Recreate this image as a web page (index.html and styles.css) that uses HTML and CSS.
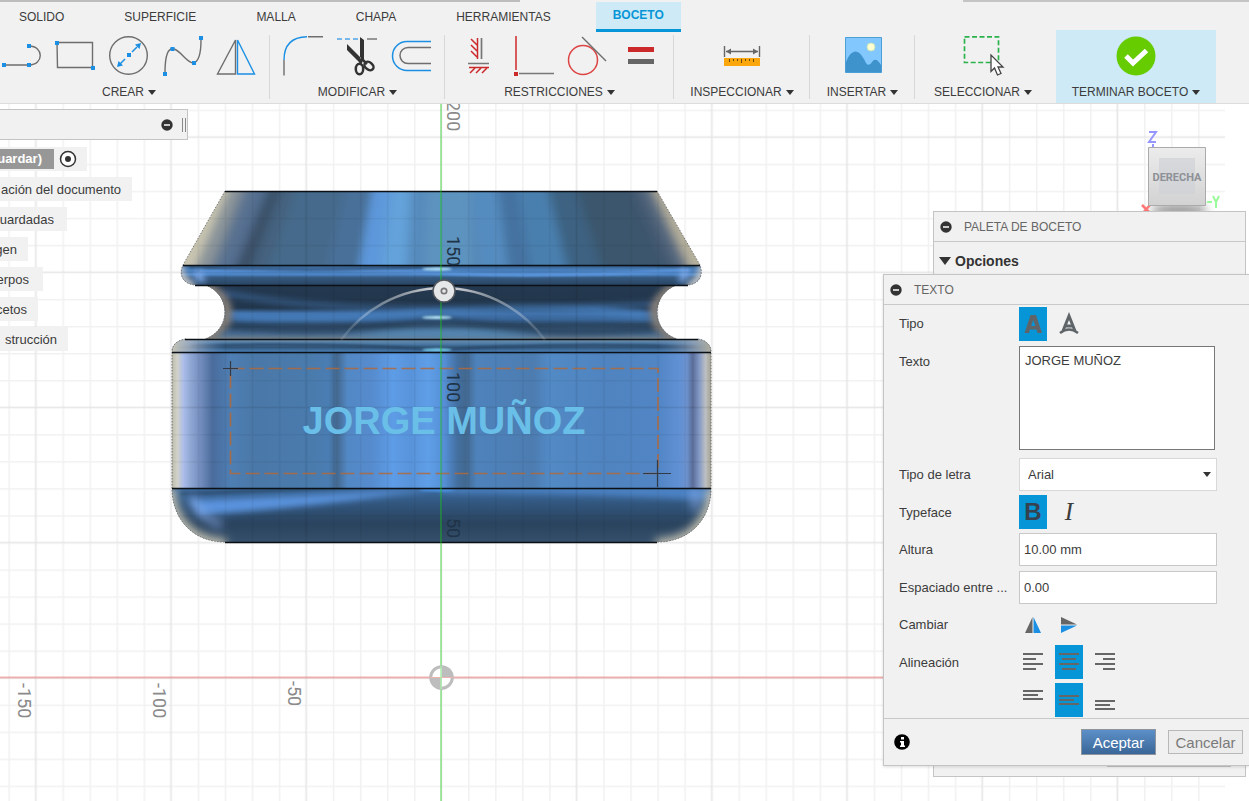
FILE: index.html
```html
<!DOCTYPE html>
<html lang="es">
<head>
<meta charset="utf-8">
<title>Boceto</title>
<link rel="stylesheet" href="styles.css">
</head>
<body>
<div class="app">
  <header class="ribbon">
    <div class="strip"><span class="strip-left"></span><span class="strip-right"></span></div>
    <nav class="tabs">
      <button class="tab">SOLIDO</button>
      <button class="tab">SUPERFICIE</button>
      <button class="tab">MALLA</button>
      <button class="tab">CHAPA</button>
      <button class="tab">HERRAMIENTAS</button>
      <button class="tab tab-active">BOCETO</button>
    </nav>
    <div class="groups">
      <section class="group group-create">
        <div class="tools">
          <button class="tool" aria-label="Línea"><svg viewBox="0 0 42 40"><path d="M4 29H27M29 10C44 10 44 29 29 29" fill="none" stroke="#6e6e6e" stroke-width="1.4"/><path d="M2 27h4v4H2zM27 8h4v4h-4zM27 27h4v4h-4z" fill="#1a8fe3"/></svg></button>
          <button class="tool" aria-label="Rectángulo"><svg viewBox="0 0 42 40"><path d="M3 6.500H38.500V31.500H3.500Z" fill="none" stroke="#6e6e6e" stroke-width="1.4"/><path d="M1 5h4v4H1zM37 30h4v4h-4z" fill="#1a8fe3"/></svg></button>
          <button class="tool" aria-label="Círculo"><svg viewBox="0 0 42 40"><circle cx="20.500" cy="19.500" r="18.800" fill="none" stroke="#6e6e6e" stroke-width="1.4"/><path d="M12 28L17 23M24 16L29 11" stroke="#1a8fe3" stroke-width="1.500"/><path d="M19 17h4v4h-4zM9 31l1.500-6 4.500 4.500zM33 7l-1.500 6-4.500-4.500z" fill="#1a8fe3"/></svg></button>
          <button class="tool" aria-label="Spline"><svg viewBox="0 0 42 40"><path d="M3 36C3 20 6 11 12 13C19 15 24 26 31 27C37 26 39 16 39 4" fill="none" stroke="#6e6e6e" stroke-width="1.4"/><path d="M1 36h4v4H1zM8.500 11h4v4h-4zM30 25h4v4h-4zM37 0h4v4h-4z" fill="#1a8fe3"/></svg></button>
          <button class="tool" aria-label="Simetría"><svg viewBox="0 0 42 40"><path d="M19.500 4V38H1.500Z" fill="none" stroke="#6e6e6e" stroke-width="1.4"/><path d="M21.500 4V38H38.500Z" fill="none" stroke="#1a8fe3" stroke-width="1.4"/></svg></button>
        </div>
        <button class="menu">CREAR<i class="caret"></i></button>
      </section>
      <section class="group group-modify">
        <div class="tools">
          <button class="tool" aria-label="Empalme"><svg viewBox="0 0 42 40"><path d="M1 24V39.500M25 .7H40" stroke="#6e6e6e" stroke-width="1.4"/><path d="M1 24C1 9 9 1 24 .7" fill="none" stroke="#1a8fe3" stroke-width="1.400"/></svg></button>
          <button class="tool" aria-label="Recortar"><svg viewBox="0 0 42 40"><path d="M0 3H22" stroke="#4da3e6" stroke-width="1.500" stroke-dasharray="5 3"/><path d="M30 3h10" stroke="#777" stroke-width="1.500"/><path d="M23 1L27 4V25L23 22ZM10 8V14L23 27L26 24Z" fill="#333"/><ellipse cx="22.500" cy="33" rx="3.700" ry="5.300" fill="none" stroke="#333" stroke-width="2.500"/><ellipse cx="32" cy="30" rx="3.600" ry="5" transform="rotate(-52 32 30)" fill="none" stroke="#333" stroke-width="2.500"/><path d="M23 29L25 23L30 28" fill="none" stroke="#333" stroke-width="2.500"/></svg></button>
          <button class="tool" aria-label="Desfase"><svg viewBox="0 0 42 40"><path d="M40 5.500H16A14 14 0 0 0 16 34.500H40" fill="none" stroke="#1a8fe3" stroke-width="1.500"/><path d="M40 11.500H17A8 8 0 0 0 17 27.500H40" fill="none" stroke="#6e6e6e" stroke-width="1.500"/></svg></button>
        </div>
        <button class="menu">MODIFICAR<i class="caret"></i></button>
      </section>
      <section class="group group-constrain">
        <div class="tools">
          <button class="tool" aria-label="Horizontal/Vertical"><svg viewBox="0 0 42 40"><path d="M19.500 2V23M11 31.500H31M13 3l6 6M13 9l6 6M13 15l6 6M17 32l-5 5M23 32l-5 5M29 32l-5 5" stroke="#cc2a2a" stroke-width="1.500"/><path d="M23.500 2V23M10 27.500H31" stroke="#777" stroke-width="1.700"/></svg></button>
          <button class="tool" aria-label="Perpendicular"><svg viewBox="0 0 42 40"><path d="M4 0V34" stroke="#cc2a2a" stroke-width="1.500"/><path d="M2 36h4v4H2z" fill="#cc2a2a"/><path d="M7 37.500H42" stroke="#777" stroke-width="1.500"/></svg></button>
          <button class="tool" aria-label="Tangente"><svg viewBox="0 0 42 40"><circle cx="17" cy="24" r="14.500" fill="none" stroke="#d44" stroke-width="1.500"/><path d="M16 1L40 25" stroke="#6e6e6e" stroke-width="1.400"/></svg></button>
          <button class="tool" aria-label="Igual"><svg viewBox="0 0 42 40"><path d="M8 11h26v5H8z" fill="#cc2a2a"/><path d="M8 23h26v5H8z" fill="#666"/></svg></button>
        </div>
        <button class="menu">RESTRICCIONES<i class="caret"></i></button>
      </section>
      <section class="group group-inspect">
        <div class="tools">
          <button class="tool" aria-label="Medir"><svg viewBox="0 0 42 40"><path d="M3.500 10V21M38.500 10V21M5 15.500H37" stroke="#666" stroke-width="1.400"/><path d="M5 15.500l5-3v6zM37 15.500l-5-3v6z" fill="#666"/><path d="M3 22h36v8H3z" fill="#fba60c"/><path d="M8.500 23v3M12.500 23v2M16.500 23v2M20.500 23v4M24.500 23v2M28.500 23v2M32.500 23v3" stroke="#6b4a10"/></svg></button>
        </div>
        <button class="menu">INSPECCIONAR<i class="caret"></i></button>
      </section>
      <section class="group group-insert">
        <div class="tools">
          <button class="tool" aria-label="Insertar imagen"><svg viewBox="0 0 42 40"><path d="M3.500 1.500h36v35h-36z" fill="#82c8ff" stroke="#4b9fd8"/><path d="M4 26C10 12 17 12 24 27C26 30 28 29 30 26C33 22 36 24 39 29V36H4Z" fill="#3f93cd"/><circle cx="29" cy="11" r="4" fill="#ffffd0" stroke="#c9e3c0"/></svg></button>
        </div>
        <button class="menu">INSERTAR<i class="caret"></i></button>
      </section>
      <section class="group group-select">
        <div class="tools">
          <button class="tool" aria-label="Seleccionar"><svg viewBox="0 0 42 40"><path d="M2.500 .8H36.500V26.500H2.500Z" fill="none" stroke="#2bb24c" stroke-width="1.700" stroke-dasharray="5 2.500"/><path d="M29 19V35.500L32.500 32L35.500 39L39 37.500L36 31H41Z" fill="#fff" stroke="#444" stroke-width="1.300"/></svg></button>
        </div>
        <button class="menu">SELECCIONAR<i class="caret"></i></button>
      </section>
      <section class="group group-finish">
        <div class="tools">
          <button class="tool" aria-label="Terminar"><svg viewBox="0 0 42 40"><circle cx="21" cy="20" r="19.500" fill="#66cc00"/><path d="M11 20L18 27L31.500 14.500" fill="none" stroke="#fff" stroke-width="5"/></svg></button>
        </div>
        <button class="menu">TERMINAR BOCETO<i class="caret"></i></button>
      </section>
    </div>
  </header>

  <main class="viewport">
    <svg class="scene" role="img" aria-label="Modelo 3D">
      <defs>
        <pattern id="minor" x="441" y="677.500" width="27.04" height="27.04" patternUnits="userSpaceOnUse"><path d="M0 0H28M0 0V28" stroke="#000" stroke-opacity=".055" stroke-width="3"/></pattern>
        <pattern id="major" x="440" y="676.500" width="135.200" height="135.200" patternUnits="userSpaceOnUse"><path d="M0 1H136M1 0V136" stroke="#000" stroke-opacity=".05" stroke-width="1.500"/></pattern>
        <clipPath id="cCone"><path d="M225 191H657L700 265H183Z"/></clipPath>
        <clipPath id="cLip"><path d="M183 265H700C704 277 698 284 688 285H195C184 284 178 276 183 265Z"/></clipPath>
        <clipPath id="cNeck"><path d="M205 285H677C651 294 650 330 677 339H205C232 330 231 294 205 285Z"/></clipPath>
        <clipPath id="cShoulder"><path d="M186 339H698C706 340 711 345 711 352H172C172 345 177 340 186 339Z"/></clipPath>
        <clipPath id="cBase"><path d="M172 488H711C711 520 689 542 657 542H225C192 542 172 518 172 488Z"/></clipPath>
        <filter id="b1" x="-20%" y="-50%" width="140%" height="200%"><feGaussianBlur stdDeviation="1.200"/></filter>
        <filter id="b3" x="-20%" y="-50%" width="140%" height="200%"><feGaussianBlur stdDeviation="3"/></filter>
        <filter id="b5" x="-20%" y="-50%" width="140%" height="200%"><feGaussianBlur stdDeviation="5"/></filter>
        <linearGradient id="gBody" gradientUnits="userSpaceOnUse" x1="172" x2="711" y1="0" y2="0">
          <stop offset="0" stop-color="#bdbcac"/><stop offset=".01" stop-color="#d2d2ca"/><stop offset=".022" stop-color="#a9bcea"/><stop offset=".035" stop-color="#8ea6d2"/><stop offset=".055" stop-color="#6f8abb"/><stop offset=".075" stop-color="#4a6c9c"/><stop offset=".11" stop-color="#4e7fb4"/><stop offset=".15" stop-color="#4a78a8"/><stop offset=".26" stop-color="#4a7bad"/><stop offset=".29" stop-color="#4a7db3"/><stop offset=".306" stop-color="#43688f"/><stop offset=".325" stop-color="#5288c4"/><stop offset=".37" stop-color="#568bce"/><stop offset=".41" stop-color="#5d9ce6"/><stop offset=".445" stop-color="#5893da"/><stop offset=".475" stop-color="#5f9fe8"/><stop offset=".505" stop-color="#558fd6"/><stop offset=".53" stop-color="#436f9f"/><stop offset=".545" stop-color="#42688f"/><stop offset=".565" stop-color="#4e82ba"/><stop offset=".61" stop-color="#4e80b8"/><stop offset=".67" stop-color="#4c7cb0"/><stop offset=".7" stop-color="#528ac6"/><stop offset=".8" stop-color="#4f84c0"/><stop offset=".9" stop-color="#5185c4"/><stop offset=".94" stop-color="#6090d4"/><stop offset=".955" stop-color="#6d93cf"/><stop offset=".966" stop-color="#5a6c98"/><stop offset=".978" stop-color="#8298c4"/><stop offset=".99" stop-color="#bcc0c2"/><stop offset="1" stop-color="#a5a292"/>
        </linearGradient>
        <linearGradient id="gLip" x1="0" x2="0" y1="0" y2="1"><stop offset="0" stop-color="#35557a"/><stop offset=".2" stop-color="#457cb8"/><stop offset=".45" stop-color="#4d86c8"/><stop offset=".6" stop-color="#35597f"/><stop offset="1" stop-color="#27415e"/></linearGradient>
        <linearGradient id="gNeck" x1="0" x2="0" y1="0" y2="1"><stop offset="0" stop-color="#24384f"/><stop offset=".42" stop-color="#22364b"/><stop offset=".52" stop-color="#3f6ea5"/><stop offset=".62" stop-color="#3a679b"/><stop offset=".72" stop-color="#2b4763"/><stop offset=".88" stop-color="#466a90"/><stop offset="1" stop-color="#7a8388"/></linearGradient>
        <linearGradient id="gShoulder" x1="0" x2="0" y1="0" y2="1"><stop offset="0" stop-color="#7590a4"/><stop offset=".35" stop-color="#4c7ba8"/><stop offset=".6" stop-color="#335779"/><stop offset="1" stop-color="#4f8acb"/></linearGradient>
        <linearGradient id="gBase" x1="0" x2="0" y1="0" y2="1"><stop offset="0" stop-color="#3c6ba0"/><stop offset=".3" stop-color="#31557c"/><stop offset=".65" stop-color="#2a435e"/><stop offset="1" stop-color="#35506c"/></linearGradient>
        <linearGradient id="gEdge" gradientUnits="userSpaceOnUse" x1="172" x2="711" y1="0" y2="0"><stop offset="0" stop-color="#c6c4b4"/><stop offset=".035" stop-color="#b4bccb" stop-opacity=".7"/><stop offset=".1" stop-color="#6b8fc4" stop-opacity="0"/><stop offset=".9" stop-color="#6b8fc4" stop-opacity="0"/><stop offset=".965" stop-color="#a5aebd" stop-opacity=".6"/><stop offset="1" stop-color="#b0ad9d"/></linearGradient>
        <linearGradient id="gArc" gradientUnits="userSpaceOnUse" x1="341" x2="545" y1="0" y2="0"><stop offset="0" stop-color="#fff" stop-opacity=".1"/><stop offset=".3" stop-color="#d5d8dc" stop-opacity=".6"/><stop offset=".5" stop-color="#e8e8e8"/><stop offset=".7" stop-color="#d5d8dc" stop-opacity=".6"/><stop offset="1" stop-color="#fff" stop-opacity=".1"/></linearGradient>
      </defs>
      <g transform="translate(0 -104)">
        <g clip-path="url(#cCone)"><g filter="url(#b5)">
          <path fill="#456a8b" d="M200 170H680V290H170Z"/>
          <path fill="#c8c4b0" d="M213 180H234L193 275H158Z"/><path fill="#8d959a" d="M238 176L193 280H208L248 176Z"/>
          <path fill="#5f7690" d="M248 176L206 280H220L257 176Z"/><path fill="#556e90" d="M258 176L216 280H232L270 176Z"/><path fill="#3a5066" d="M274 176L230 280H247L286 176Z"/>
          <path fill="#44627f" d="M286 176L247 280H265L300 176Z"/><path fill="#4a7099" d="M348 176L324 280H350L370 176Z"/><path fill="#5d98dc" d="M374 176L356 280H380L392 176Z"/>
          <path fill="#64a2da" d="M392 176L380 280H406L412 176Z"/><path fill="#568bbd" d="M412 176L406 280H424L427 176Z"/><path fill="#5d93bf" d="M427 176L424 280H476L470 176Z"/>
          <path fill="#558cc0" d="M470 176L478 280H510L496 176Z"/><path fill="#4572a0" d="M496 176L510 280H533L515 176Z"/><path fill="#487fae" d="M515 176L533 280H570L545 176Z"/>
          <path fill="#3e6282" d="M545 176L570 280H605L572 176Z"/><path fill="#3b566d" d="M572 176L605 280H668L622 176Z"/><path fill="#43586f" d="M622 176L668 280H681L633 176Z"/>
          <path fill="#57697f" d="M633 176L681 280H696L645 176Z"/><path fill="#b5b09c" d="M648 180L692 275H718L680 180Z"/>
        </g></g>
        <g clip-path="url(#cLip)">
          <path fill="url(#gLip)" d="M175 265H708V286H175Z"/>
          <g filter="url(#b1)"><path d="M200 272Q330 268 440 273T690 270" fill="none" stroke="#5b97df" stroke-width="3"/><path d="M190 267Q320 273 440 266T690 267" fill="none" stroke="#2c4b70" stroke-width="2"/></g>
          <ellipse cx="437" cy="269" rx="15" ry="1.500" fill="#bdeeff" filter="url(#b1)"/>
          <path d="M178 262Q178 280 194 288M704 262Q704 280 688 288" fill="none" stroke="#c3c7cb" stroke-width="9" filter="url(#b3)"/>
          <path d="M201 271Q192 277 205 280M681 270Q692 275 679 280" fill="none" stroke="#82aef0" stroke-width="6" filter="url(#b3)"/>
        </g>
        <g clip-path="url(#cNeck)">
          <path fill="url(#gNeck)" d="M200 285H682V340H200Z"/>
          <g filter="url(#b3)"><path d="M218 292Q300 308 420 309T658 304" fill="none" stroke="#3a6596" stroke-width="4"/><path d="M235 316Q330 320 440 312T645 315" fill="none" stroke="#4884c6" stroke-width="5"/><path d="M230 325Q330 336 440 319Q540 338 660 328" fill="none" stroke="#263f5a" stroke-width="6"/><path d="M340 338Q440 320 545 338Z" fill="#5588b4"/><path d="M204 284Q250 312 204 341M678 284Q632 312 678 341" fill="none" stroke="#857f78" stroke-width="10"/></g>
          <ellipse cx="437" cy="317.500" rx="15" ry="1.500" fill="#bdeeff" filter="url(#b1)"/>
        </g>
        <g clip-path="url(#cShoulder)">
          <path fill="url(#gShoulder)" d="M172 339H711V353H172Z"/>
          <path d="M190 346Q330 342 440 350Q560 342 695 347" fill="none" stroke="#29496a" stroke-width="2.500" filter="url(#b1)"/>
          <ellipse cx="437" cy="350" rx="15" ry="1.500" fill="#7fdcff" filter="url(#b1)"/>
          <path fill="url(#gEdge)" d="M172 339H711V353H172Z"/>
        </g>
        <path fill="url(#gBody)" d="M172 352H711V488H172Z"/>
        <g clip-path="url(#cBase)">
          <path fill="url(#gBase)" d="M170 488H712V543H170Z"/>
          <g filter="url(#b3)"><path d="M190 500Q330 495 440 488L390 495Q300 508 200 515Z" fill="#5a93dd"/><path d="M440 486H711V500Q570 492 440 492Z" fill="#4b82c4"/></g>
          <path d="M180 494Q310 489 430 484" fill="none" stroke="#30557c" stroke-width="4" filter="url(#b1)"/>
          <path d="M168 488C168 524 194 546 226 546M714 488C714 524 690 546 656 546" fill="none" stroke="#c2c0b0" stroke-width="15" filter="url(#b5)"/>
          <path d="M192 496Q195 516 222 525M695 488V510" fill="none" stroke="#8fb0ee" stroke-opacity=".6" stroke-width="8" filter="url(#b5)"/>
          <ellipse cx="437" cy="490" rx="18" ry="1.500" fill="#4b96ec" filter="url(#b1)"/>
        </g>
        <g fill="none" stroke="#777" stroke-dasharray="1.500 1.500"><path d="M225 191L183 265C178 276 184 284 195 285M205 285C232 294 231 330 205 339M186 339C177 340 172 345 172 352V488C172 518 192 542 225 542"/><path d="M657 191L700 265C704 277 698 284 688 285M677 285C651 294 650 330 677 339M698 339C706 340 711 345 711 352V488C711 520 689 542 657 542"/></g>
        <path d="M225 191.500H657M183 265.500H700M195 285.500H688M185 339.500H698M172 352.500H711M172 488.500H711M225 542.500H657" stroke="#0b1116" stroke-width="1.400"/>
        <g class="grid"><path fill="url(#minor)" d="M0 104H1225V1600H0Z"/><path fill="url(#major)" d="M0 104H1225V1600H0Z"/></g>
        <path d="M0 677.500H1225" stroke="#e85050" stroke-opacity=".4" stroke-width="2"/>
        <path d="M230.500 368.500H658V473.500H230.500Z" fill="none" stroke="#b06a3c" stroke-opacity=".85" stroke-width="1.700" stroke-dasharray="14 5"/>
        <path d="M223 368.500H238M230.500 361V376M643 473.500H671M657.500 460V487" stroke="#333a44" stroke-width="1.200"/>
        <text class="label3d" x="444" y="434" text-anchor="middle">JORGE MUÑOZ</text>
        <g class="axis"><text transform="translate(447 101) rotate(90)">200</text><text class="dark" transform="translate(447 236) rotate(90)">150</text><text class="dark" transform="translate(447 372) rotate(90)">100</text><text class="dark" transform="translate(447 518) rotate(90)">50</text><text transform="translate(18 683) rotate(90)">-150</text><text transform="translate(153 683) rotate(90)">-100</text><text transform="translate(288 681) rotate(90)">-50</text></g>
        <path d="M341 340A126 126 0 0 1 545 340" fill="none" stroke="url(#gArc)" stroke-width="2.500"/>
        <path d="M441 104V1600" stroke="#1fd21f" stroke-opacity=".38" stroke-width="2"/>
        <circle cx="444" cy="291" r="11" fill="#e6e7e9" stroke="#50565c" stroke-width="1.500"/><circle cx="444" cy="291" r="2.700" fill="none" stroke="#777" stroke-width="1.700"/>
        <g><circle cx="441.500" cy="677.500" r="10.800" fill="#fff" stroke="#bdbdbd" stroke-width="3"/><path d="M441.500 677.500V666A11.500 11.500 0 0 1 453 677.500ZM441.500 677.500V689A11.500 11.500 0 0 1 430 677.500Z" fill="#bdbdbd"/><path d="M430 677.500H453" stroke="#f0b0b0"/><path d="M441 666V689" stroke="#a8eda8" stroke-width="1.500"/></g>
      </g>
    </svg>

    <svg class="viewcube" viewBox="0 0 88 88" role="img" aria-label="Vista derecha">
      <defs><linearGradient id="cube" x1="0" x2="0" y1="0" y2="1"><stop offset="0" stop-color="#ececec"/><stop offset="1" stop-color="#d2d2d2"/></linearGradient><filter id="sh" x="-20%" y="-80%" width="140%" height="260%"><feGaussianBlur stdDeviation="4"/></filter></defs>
      <ellipse cx="42" cy="82" rx="29" ry="6" fill="#999" filter="url(#sh)"/>
      <path d="M12 4H19L12 14H19M16 16V19" fill="none" stroke="#9696ff" stroke-width="2"/>
      <path d="M5 77L12 84M13 77L5 86" stroke="#f77" stroke-width="2.500"/>
      <path d="M76 68L79 74L82 68M79 73V80M70 74H75" fill="none" stroke="#9bfa9b" stroke-width="2"/>
      <path d="M11.500 19.500H68.500V77.500H11.500Z" fill="url(#cube)" stroke="#aaa"/>
      <path d="M22 30H58V66H22Z" fill="#cfd2d7" opacity=".7"/>
      <text x="40" y="53" text-anchor="middle">DERECHA</text>
    </svg>

    <aside class="browser">
      <div class="browser-head"><svg class="minus" viewBox="0 0 12 12"><circle cx="6" cy="6" r="5.700"/><path d="M3 6h6"/></svg><span class="grip"></span></div>
      <ul class="tree">
        <li class="row row-root"><span class="chip">uardar)</span><svg class="target" viewBox="0 0 18 18"><circle cx="9" cy="9" r="7.500" fill="#fff" stroke="#333" stroke-width="1.500"/><circle cx="9" cy="9" r="3" fill="#333"/></svg></li>
        <li class="row row-settings"><span>ación del documento</span></li>
        <li class="row row-views"><span>uardadas</span></li>
        <li class="row row-origin"><span>gen</span></li>
        <li class="row row-bodies"><span>erpos</span></li>
        <li class="row row-sketches"><span>cetos</span></li>
        <li class="row row-construction"><span>strucción</span></li>
      </ul>
    </aside>

    <section class="panel palette">
      <h2 class="panel-title"><svg class="minus" viewBox="0 0 12 12"><circle cx="6" cy="6" r="5.700"/><path d="M3 6h6"/></svg>PALETA DE BOCETO</h2>
      <h3 class="options"><i class="caret caret-big"></i>Opciones</h3>
      <span class="palette-foot"></span>
    </section>

    <form class="panel dialog">
      <h2 class="panel-title"><svg class="minus" viewBox="0 0 12 12"><circle cx="6" cy="6" r="5.700"/><path d="M3 6h6"/></svg>TEXTO</h2>
      <div class="fields">
        <div class="field"><span>Tipo</span><div class="choices">
          <button type="button" class="choice on" aria-label="Texto"><svg viewBox="0 0 28 34"><path fill-rule="evenodd" fill="#5f6468" d="M11.500 8H17L23 26H18.500L17.500 22.500H11L10 26H5.500ZM14.200 13L12.200 19H16.300Z"/></svg></button>
          <button type="button" class="choice" aria-label="Texto en trayectoria"><svg viewBox="0 0 28 34"><path d="M8 24L14 9L20 24M10 19H18" fill="none" stroke="#5f6468" stroke-width="3"/><path d="M5 26Q14 19 23 26" fill="none" stroke="#5f6468" stroke-width="2.500"/></svg></button>
        </div></div>
        <div class="field field-text"><label for="txt">Texto</label><textarea id="txt">JORGE MUÑOZ</textarea></div>
        <div class="field"><label for="font">Tipo de letra</label><div class="select"><select id="font"><option>Arial</option></select><i class="caret"></i></div></div>
        <div class="field"><span>Typeface</span><div class="choices">
          <button type="button" class="choice on bold">B</button>
          <button type="button" class="choice italic">I</button>
        </div></div>
        <div class="field"><label for="height">Altura</label><input id="height" type="text" value="10.00 mm"></div>
        <div class="field"><label for="spacing">Espaciado entre ...</label><input id="spacing" type="text" value="0.00"></div>
        <div class="field"><span>Cambiar</span><div class="choices">
          <button type="button" class="choice" aria-label="Voltear horizontal"><svg viewBox="0 0 28 34"><path d="M13.500 9V25H6Z" fill="#666"/><path d="M14.500 9V25H22Z" fill="#1a8fe3"/></svg></button>
          <button type="button" class="choice" aria-label="Voltear vertical"><svg viewBox="0 0 28 34"><path d="M6 9V16.500H22Z" fill="#666"/><path d="M6 25V17.500H22Z" fill="#1a8fe3"/></svg></button>
        </div></div>
        <div class="field"><span>Alineación</span><div class="choices">
          <button type="button" class="choice" aria-label="Izquierda"><svg viewBox="0 0 28 34"><path d="M4 9H24M4 14H17M4 19H24M4 24H17"/></svg></button>
          <button type="button" class="choice on" aria-label="Centro"><svg viewBox="0 0 28 34"><path d="M4 9H24M7 14H21M4 19H24M7 24H21"/></svg></button>
          <button type="button" class="choice" aria-label="Derecha"><svg viewBox="0 0 28 34"><path d="M4 9H24M12 14H24M4 19H24M12 24H24"/></svg></button>
        </div></div>
        <div class="field"><span></span><div class="choices">
          <button type="button" class="choice" aria-label="Arriba"><svg viewBox="0 0 28 34"><path d="M4 8H24M4 12H19M4 16H24"/></svg></button>
          <button type="button" class="choice on" aria-label="Medio"><svg viewBox="0 0 28 34"><path d="M4 13H24M4 17H19M4 21H24"/></svg></button>
          <button type="button" class="choice" aria-label="Abajo"><svg viewBox="0 0 28 34"><path d="M4 18H24M4 22H19M4 26H24"/></svg></button>
        </div></div>
      </div>
      <footer class="actions">
        <svg class="info" viewBox="0 0 16 16"><circle cx="8" cy="8" r="7.800"/><path d="M7 3h3v2.500H7zM6 7h4v4.500h1V13H6v-1.500h1V8.500H6z" fill="#fff"/></svg>
        <button type="button" class="btn primary">Aceptar</button>
        <button type="button" class="btn">Cancelar</button>
      </footer>
    </form>
  </main>
</div>
</body>
</html>
```
FILE: styles.css
```css
* { box-sizing: border-box; }
html, body { height: 100%; margin: 0; }
body { font-family: "Liberation Sans", Arial, sans-serif; font-size: 13px; color: #3c3c3c; }
button, input, textarea, select { font: inherit; color: inherit; }
button { background: none; border: 0; padding: 0; }
svg { display: block; }

.app { display: flex; flex-direction: column; height: 100%; overflow: hidden; }

/* Ribbon */
.ribbon { background: #f1f1f1; border-bottom: 1px solid #dcdcdc; flex: none; }
.strip { display: flex; justify-content: space-between; height: 2px; }
.strip-left { flex: 0 0 520px; background: #bdbdbd; }
.strip-right { flex: 0 0 286px; background: #c4c4c4; }
.tabs { display: flex; gap: 30px; padding-left: 4px; height: 30px; margin-bottom: -2px; }
.tab { padding: 0 15px; font-size: 12px; line-height: 28px; white-space: nowrap; }
.tab-active { background: #cdeaf6; border-bottom: 3px solid #0696d7; color: #0696d7; font-weight: bold; line-height: 27px; padding: 0 17px; }
.groups { display: flex; height: 73px; }
.group { display: flex; flex-direction: column; align-items: center; flex: none; padding-top: 6px; gap: 8px; position: relative; }
.group:not(.group-select):not(.group-finish)::after { content: ""; position: absolute; right: 0; top: 5px; width: 1px; height: 64px; background: #d8d8d8; }
.group-create { width: 282px; margin-left: -12px; }
.group-modify { width: 175px; }
.group-constrain { width: 229px; }
.group-inspect { width: 136px; }
.group-insert { width: 105px; }
.group-select { width: 136px; }
.group-finish { width: 160px; margin-left: 5px; background: #cdeaf6; }
.tools { display: flex; gap: 12px; }
.tool svg { width: 42px; height: 40px; overflow: visible; }
.menu { display: flex; align-items: center; gap: 4px; font-size: 12px; line-height: 16px; white-space: nowrap; }
.caret { display: block; border: 4px solid transparent; border-top: 5px solid #333; border-bottom: 0; }
.caret-big { border-width: 8px 6px 0; }

/* Viewport */
.viewport { position: relative; flex: 1; min-height: 0; overflow: hidden; background: #fff; }
.scene { position: absolute; inset: 0; width: 100%; height: 100%; }
.label3d { font: bold 38px "Liberation Sans", Arial, sans-serif; fill: #69bfe8; }
.axis { font: 18px Roboto, sans-serif; fill: #8a8a8a; }
.axis .dark { fill: #203448; }
.viewcube { position: absolute; right: 24px; top: 24px; width: 88px; height: 88px; }
.viewcube text { font: bold 11px Roboto, sans-serif; fill: #8d9096; }

/* Browser tree */
.browser { position: absolute; left: 0; top: 5px; width: 188px; }
.browser-head { display: flex; align-items: center; justify-content: flex-end; gap: 9px; height: 31px; padding-right: 1px; background: #f1f1f1; border: 1px solid #c4c4c4; border-left: 0; }
.minus { width: 12px; height: 12px; fill: #333; stroke: #fff; stroke-width: 1.5px; flex: none; }
.minus circle { stroke: none; }
.grip { width: 4px; height: 14px; border: 1px solid #888; border-width: 0 1px; }
.tree { list-style: none; margin: 7px 0 0; padding: 0; display: flex; flex-direction: column; align-items: flex-start; gap: 6px; }
.row { display: flex; align-items: center; justify-content: flex-end; height: 24px; padding-right: 11px; background: #f1f1f1; overflow: hidden; white-space: nowrap; }
.row-root { width: 87px; gap: 5px; padding-right: 10px; }
.chip { display: flex; justify-content: flex-end; width: 56px; height: 20px; line-height: 20px; padding-right: 12px; background: #979797; color: #fff; font-weight: bold; flex: none; }
.target { width: 18px; height: 18px; flex: none; }
.row-settings { width: 132px; }
.row-views { width: 67px; padding-right: 13px; }
.row-origin { width: 28px; }
.row-bodies { width: 43px; padding-right: 14px; }
.row-sketches { width: 38px; }
.row-construction { width: 68px; }

/* Floating panels */
.panel { position: absolute; background: #f1f1f1; border: 1px solid #c4c4c4; }
.panel-title { display: flex; align-items: center; gap: 12px; height: 30px; margin: 0; padding-left: 6px; border-bottom: 1px solid #c9c9c9; font-size: 12px; font-weight: normal; color: #666; }
.palette { right: 3px; top: 107px; width: 313px; height: 566px; display: flex; flex-direction: column; padding-bottom: 9px; }
.options { display: flex; align-items: center; gap: 4px; margin: 0; padding-left: 5px; height: 38px; font-size: 14px; color: #333; }
.palette-foot { margin: auto 14px 0 auto; width: 124px; height: 24px; border: 1px solid #c4c4c4; }
.dialog { right: 0; top: 170px; width: 366px; border-right: 0; box-shadow: 0 1px 3px #0002; }
.fields { padding: 0 0 0 15px; }
.field { display: grid; grid-template-columns: 120px 198px; align-items: center; height: 37px; white-space: nowrap; }
.field:nth-child(even) { height: 38px; }
.field.field-text { height: 114px; align-items: start; padding-top: 4px; }
.field-text label { padding-top: 8px; }
.field input { width: 198px; height: 33px; padding: 0 4px; border: 1px solid #c8c8c8; background: #fff; }
textarea { width: 196px; height: 104px; padding: 6px 5px; border: 1px solid #777; background: #fff; resize: none; }
.select { display: flex; align-items: center; justify-content: flex-end; height: 33px; background: #fff; border: 1px solid #d8d8d8; position: relative; }
.select select { flex: 1; height: 100%; padding: 0 8px; border: 0; background: transparent; appearance: none; }
.select .caret { margin-right: 5px; }
.choices { display: flex; gap: 8px; }
.choice { width: 28px; height: 34px; fill: none; stroke: #666; stroke-width: 2px; }
.choice svg { width: 28px; height: 34px; }
.choice path[fill] { stroke: none; }
.choice path[stroke] { stroke: #5f6468; }
.on { background: #0696d7; }
.bold { font-size: 24px; font-weight: bold; line-height: 34px; color: #36424f; }
.italic { font: italic 25px/34px "Liberation Serif", serif; }
.actions { display: flex; align-items: center; height: 47px; padding: 0 6px 0 10px; border-top: 1px solid #c9c9c9; }
.info { width: 16px; height: 16px; margin-right: auto; }
.btn { width: 75px; height: 24px; border: 1px solid #b8b8b8; background: #ececec; color: #7a7a7a; font-size: 15px; }
.primary { height: 26px; margin-right: 12px; border-color: #8e959c; background: linear-gradient(#5c90c8, #3a6698); color: #fff; }
```
